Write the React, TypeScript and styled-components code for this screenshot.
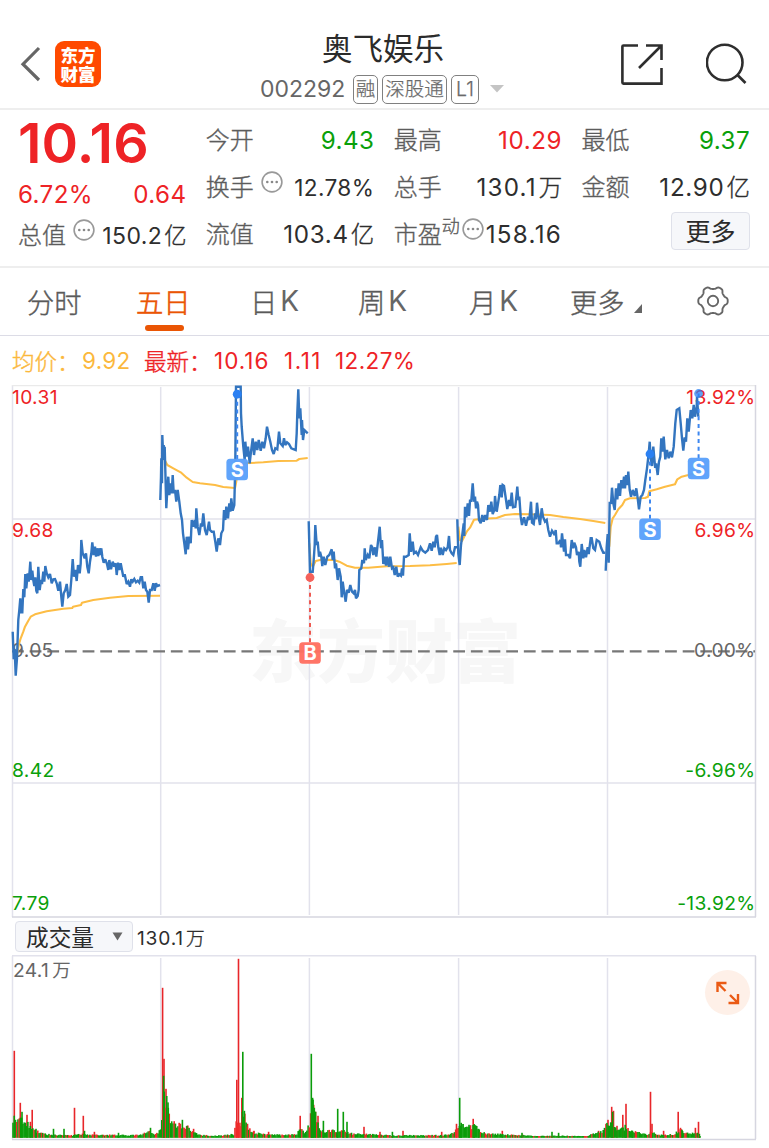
import React from 'react';
import styled, { createGlobalStyle } from 'styled-components';

const GlobalStyle = createGlobalStyle`
  * { box-sizing: border-box; }
  html, body { margin: 0; padding: 0; background: #fff; }
  body {
    font-family: Inter, 'Noto Sans CJK SC', sans-serif;
    color: #333;
    overflow: hidden;
  }
`;

const RED = '#ee2326';
const GREEN = '#0aa00a';
const GREY = '#666';
const DARK = '#2e2e2e';

const Screen = styled.main`
  width: 769px;
  height: 1148px;
  display: flex;
  flex-direction: column;
  background: #fff;
`;

/* ---------- header ---------- */

const Header = styled.header`
  height: 110px;
  flex: none;
  display: grid;
  grid-template-columns: 240px 1fr 149px;
  border-bottom: 2px solid #eee;
`;

const HeaderLeft = styled.div`
  display: flex;
  align-items: center;
  gap: 14px;
  padding: 20px 0 0 20px;
`;

const Logo = styled.div`
  width: 46px;
  height: 46px;
  border-radius: 9px;
  background: #ff4a00;
  color: #fff;
  display: flex;
  flex-direction: column;
  align-items: center;
  justify-content: center;
  font: 900 17.5px/19.5px 'Noto Sans CJK SC', sans-serif;
`;

const HeaderMid = styled.div`
  display: flex;
  flex-direction: column;
  padding-left: 20px;
`;

const StockName = styled.h1`
  margin: 29px 0 0 62px;
  font: 400 30.5px/36px 'Noto Sans CJK SC', sans-serif;
  color: #2b2b2b;
`;

const CodeLine = styled.div`
  display: flex;
  align-items: center;
  height: 30px;
  margin-top: 9px;
`;

const Code = styled.span`
  width: 93px;
  font-size: 23px;
  line-height: 30px;
  color: ${GREY};
`;

const Tag = styled.span<{ $w: number }>`
  width: ${(p) => p.$w}px;
  height: 29px;
  margin-right: 4px;
  border: 1.4px solid #808080;
  border-radius: 5px;
  display: flex;
  align-items: center;
  justify-content: center;
  font-size: 19.5px;
  font-weight: 300;
  line-height: 27px;
  white-space: nowrap;
  color: #6a6a6a;
  -webkit-text-stroke: 0.25px currentColor;
`;

const Caret = styled.svg`
  display: block;
  margin-left: 7px;
`;

const HeaderRight = styled.div`
  display: flex;
  align-items: center;
  gap: 42px;
  padding-top: 20px;
`;

/* ---------- quote figures ---------- */

const Quote = styled.section`
  height: 158px;
  flex: none;
  display: flex;
  justify-content: space-between;
  padding: 6px 19px 0 18px;
  border-bottom: 2px solid #eee;
`;

const QuoteColumn = styled.div`
  width: 168.5px;
  display: flex;
  flex-direction: column;
`;

const Row = styled.div<{ $h?: number }>`
  height: ${(p) => p.$h ?? 47}px;
  display: flex;
  align-items: center;
  justify-content: space-between;
  white-space: nowrap;
`;

const Price = styled.div`
  height: 57px;
  font-size: 55.5px;
  line-height: 54px;
  font-weight: 600;
  letter-spacing: 0.1px;
  color: ${RED};
`;

const Label = styled.span`
  display: inline-flex;
  align-items: center;
  font: 300 24px/34px 'Noto Sans CJK SC', sans-serif;
  padding-bottom: 2px;
  color: #5c5c5c;
  -webkit-text-stroke: 0.35px currentColor;
`;

const Value = styled.span<{ $c?: string; $s?: number; $ls?: number }>`
  font-size: ${(p) => p.$s ?? 24.2}px;
  line-height: 34px;
  letter-spacing: ${(p) => p.$ls ?? 0.4}px;
  padding-top: 2px;
  color: ${(p) => p.$c ?? DARK};
`;

const Unit = styled.span`
  margin-left: 2px;
  letter-spacing: 0;
  font: 300 0.97em/1 'Noto Sans CJK SC', sans-serif;
  -webkit-text-stroke: 0.35px currentColor;
`;

const Dynamic = styled.sup`
  align-self: flex-start;
  font-size: 18px;
  line-height: 18px;
  vertical-align: baseline;
`;

const MoreButton = styled.button`
  align-self: flex-end;
  width: 79px;
  height: 38px;
  margin-top: 2px;
  padding: 0 0 1px;
  border: 1.5px solid #dfe1ea;
  border-radius: 4px;
  background: #f6f7fa;
  font: 400 25px/33px 'Noto Sans CJK SC', sans-serif;
  color: #2b2b2b;
`;

/* ---------- tabs ---------- */

const Tabs = styled.nav`
  height: 68px;
  flex: none;
  display: flex;
  align-items: center;
  padding-left: 27px;
  border-bottom: 1.5px solid #dcdce6;
`;

const Tab = styled.div<{ $w: number; $active?: boolean }>`
  width: ${(p) => p.$w}px;
  height: 66px;
  display: flex;
  flex-direction: column;
  align-items: flex-start;
  font: 300 27.3px/40px 'Noto Sans CJK SC', sans-serif;
  padding-top: 12px;
  color: ${(p) => (p.$active ? '#ea5504' : '#5a5a5a')};
  -webkit-text-stroke: ${(p) => (p.$active ? 0.6 : 0.4)}px currentColor;
`;

const TabText = styled.span`
  display: inline-flex;
  align-items: flex-end;
  gap: 3px;
`;

const Latin = styled.span`
  font-family: Inter, sans-serif;
  font-size: 28px;
  font-weight: 400;
  color: #666;
  -webkit-text-stroke: 0;
`;

const Underline = styled.i`
  width: 39px;
  height: 6px;
  margin: 4px 0 0 9px;
  border-radius: 3px;
  background: #ea5504;
`;

/* ---------- charts ---------- */

const Legend = styled.div`
  height: 49px;
  flex: none;
  display: flex;
  align-items: center;
  padding: 1px 0 0 12px;
  font-size: 22.5px;
  line-height: 40px;
  white-space: nowrap;
`;

const LegendItem = styled.span<{ $w: number; $c: string; $han?: boolean; $ls?: number }>`
  width: ${(p) => p.$w}px;
  color: ${(p) => p.$c};
  letter-spacing: ${(p) => p.$ls ?? 0}px;
  font-family: ${(p) => (p.$han ? "'Noto Sans CJK SC'" : 'Inter')}, sans-serif;
  font-weight: ${(p) => (p.$han ? 300 : 400)};
  padding-bottom: ${(p) => (p.$han ? 2 : 0)}px;
  -webkit-text-stroke: ${(p) => (p.$han ? 0.4 : 0)}px currentColor;
`;

const ChartSvg = styled.svg`
  display: block;
  flex: none;
`;

const VolumeBar = styled.div`
  height: 37px;
  flex: none;
  display: flex;
  align-items: center;
  gap: 4px;
  padding-left: 15px;
`;

const IndicatorSelect = styled.button`
  width: 118px;
  height: 31px;
  display: flex;
  align-items: center;
  justify-content: space-between;
  padding: 0 9px 1px 10px;
  border: 1.5px solid #dfe1ea;
  border-radius: 4px;
  background: #f6f7fa;
  font: 400 22.7px/27px 'Noto Sans CJK SC', sans-serif;
  color: #2b2b2b;
`;

const VolumePanel = styled.section`
  position: relative;
`;

const Expand = styled.button`
  position: absolute;
  left: 705px;
  top: 15px;
  width: 45px;
  height: 45px;
  padding: 0;
  border: 0;
  border-radius: 50%;
  background: #fef0e8;
`;

type Pt = [number, number];
type Session = { x: number; y: number; price: string; avg: string };

// Each session is plotted in thirds of a pixel from its own origin.
const sessions: Session[] = [
  {
    x: 0, y: 380,
    price: '38,755 41,838 44,808 47,887 51,835 55,720 58,690 61,655 64,697 67,697 70,627 73,652 76,582 79,625 83,580 86,605 89,570 91,545 94,600 97,572 100,600 103,618 106,592 109,632 112,640 115,560 119,630 123,600 126,612 130,575 133,605 136,558 140,580 145,592 150,582 155,610 160,598 165,597 170,610 175,632 180,605 184,650 187,680 191,640 196,630 200,612 205,650 210,645 214,600 218,537 222,590 226,570 230,603 234,555 239,580 242,550 244,480 248,520 254,535 258,520 262,560 266,580 270,545 274,520 277,487 281,525 285,500 288,530 291,505 295,528 298,505 301,525 304,505 307,530 311,548 316,538 321,552 325,570 328,540 333,568 338,545 343,560 347,550 350,585 354,548 358,570 362,550 366,570 370,590 374,583 380,612 385,605 390,620 394,598 398,605 403,597 408,607 413,602 418,608 422,592 426,592 430,625 434,605 438,630 442,635 446,668 450,630 455,630 460,610 464,632 468,610 472,618 480,615',
    avg: '50,830 56,795 62,775 70,755 75,740 85,722 92,710 105,703 140,694 190,686 217,684 219,680 243,675 246,668 280,660 330,653 385,648 480,647',
  },
  {
    x: 150, y: 380,
    price: '31,360 33,290 34,235 36,310 37,165 39,215 41,195 43,240 44,200 46,270 49,385 52,330 55,290 58,345 62,310 65,340 68,285 71,340 75,330 79,365 83,330 88,365 92,400 96,420 99,460 103,490 107,523 110,470 114,508 118,470 122,490 125,420 130,440 134,420 137,445 139,385 143,440 148,465 153,430 156,440 160,400 165,450 170,465 177,425 180,450 185,455 191,455 196,485 200,515 205,475 210,495 214,460 219,450 222,390 226,420 229,380 234,415 238,370 241,395 244,355 248,392 253,375 256,250 258,20 262,20 272,20 273,100 275,140 280,200 284,240 286,185 290,230 294,200 299,250 303,215 308,175 312,225 317,185 322,210 326,180 332,212 337,185 342,205 347,175 351,140 356,165 361,185 366,210 371,222 376,205 382,208 387,155 391,190 398,198 402,175 406,195 411,187 417,192 424,205 432,208 437,210 440,160 442,100 445,28 448,115 451,85 455,165 456,120 459,180 463,150 468,155 473,160',
    avg: '43,238 52,255 70,265 92,277 110,293 128,306 150,310 195,315 220,321 255,324 258,310 262,285 270,262 285,250 340,247 385,243 440,242 448,237 473,234',
  },
  {
    x: 300, y: 460,
    price: '26,184 30,335 38,335 41,300 44,255 46,195 50,255 53,245 57,290 60,275 64,290 67,318 71,290 76,315 82,290 88,285 95,268 98,300 101,275 105,325 108,310 113,360 117,325 122,350 125,412 128,365 133,400 137,425 141,390 146,398 151,375 156,395 161,400 165,390 168,415 173,408 176,390 178,330 184,325 187,300 192,310 194,265 197,300 203,285 208,295 213,255 217,262 220,285 225,262 229,290 234,245 239,200 243,265 246,240 250,312 254,290 258,317 262,290 267,320 271,290 276,325 280,322 284,345 289,320 293,350 298,343 303,347 306,325 309,347 312,290 318,290 326,285 329,220 333,275 338,245 342,280 348,275 354,285 362,262 368,272 376,278 384,270 390,250 395,272 400,245 404,262 408,230 411,225 415,262 419,285 423,263 428,285 433,265 438,270 443,262 447,228 450,270 455,280 460,285 465,262 472,262',
    avg: '28,250 32,310 38,320 47,303 60,300 100,299 118,305 140,317 165,323 205,323 260,319 330,318 390,316 440,312 470,309',
  },
  {
    x: 450, y: 460,
    price: '22,178 25,280 29,315 33,255 37,225 41,190 43,228 45,140 49,172 53,130 57,168 60,122 64,122 68,70 72,125 75,110 78,145 81,125 84,135 87,180 92,190 97,165 101,185 106,165 111,180 115,135 120,155 124,125 128,162 133,150 135,108 140,155 145,125 148,105 151,75 155,112 158,75 162,78 166,105 172,147 177,120 181,138 185,98 189,142 196,140 200,100 202,80 205,120 208,110 212,170 216,195 222,172 228,197 234,170 238,180 243,125 246,188 251,192 255,160 258,178 261,128 265,165 270,195 275,145 279,170 285,185 290,180 295,210 300,230 306,212 314,225 317,210 320,250 325,250 331,240 333,262 336,220 342,275 345,238 348,285 355,285 360,295 365,240 370,265 373,248 378,262 381,285 386,275 388,305 391,320 395,252 400,295 403,270 408,292 413,262 416,282 422,235 425,235 430,265 435,270 440,240 448,245 454,265 460,278 466,278',
    avg: '25,200 30,240 36,243 50,215 60,203 72,179 100,176 140,174 165,165 195,162 240,163 300,165 340,171 390,177 430,183 466,189',
  },
  {
    x: 590, y: 380,
    price: '47,572 50,500 53,462 56,548 59,365 63,372 66,323 70,370 74,390 78,325 82,358 86,310 90,348 94,300 98,325 102,290 105,325 108,285 112,315 115,275 119,330 123,350 128,330 134,348 139,325 143,355 147,388 152,350 157,345 162,330 166,300 171,265 176,220 179,185 182,235 186,258 190,200 195,258 199,255 203,285 207,245 211,230 214,175 218,215 221,170 226,238 231,210 236,235 241,215 246,232 251,200 256,130 260,90 268,85 272,130 276,175 280,212 284,172 288,185 292,115 296,155 302,90 307,115 311,75 315,110 320,80 321,50 325,110',
    avg: '58,500 62,440 68,415 75,405 85,388 97,375 105,360 120,355 165,354 174,350 178,334 200,328 225,320 255,313 262,298 275,290 295,285 318,278 327,270',
  },
];

const place = (points: string, s: Session) =>
  points
    .split(' ')
    .map((p) => {
      const [x, y] = p.split(',').map(Number);
      return `${(s.x + x / 3).toFixed(1)},${(s.y + y / 3).toFixed(1)}`;
    })
    .join(' ');

const AxisText = styled.text`
  font: 400 19.2px Inter, 'Noto Sans CJK SC', sans-serif;
  letter-spacing: 0.35px;
`;

const Watermark = styled.text`
  font: 900 68px 'Noto Sans CJK SC', sans-serif;
  fill: #f7f7f7;
`;

const MarkText = styled.text`
  font: 700 20px Inter, sans-serif;
  fill: #fff;
`;

type MarkProps = { x: number; dot: number; box: number; letter: string; faded?: boolean };

function TradeMark({ x, dot, box, letter, faded }: MarkProps) {
  const buy = letter === 'B';
  const line = buy ? '#ee5a52' : '#3d87f0';
  return (
    <g>
      <line x1={x} x2={x} y1={dot} y2={box} stroke={line} strokeWidth="2" strokeDasharray="4 3.6" />
      <circle cx={x} cy={dot} r="4.4" fill={buy ? '#f5615a' : '#2b80f2'} opacity={faded ? 0.75 : 1} />
      <rect x={x - 10.8} y={box - 10.8} width="21.6" height="21.6" rx="3.5" fill={buy ? '#ff6f61' : '#5aa0fb'} opacity="0.96" />
      <MarkText x={x} y={box + 7.2} textAnchor="middle">{letter}</MarkText>
    </g>
  );
}

const dayLines = [160.7, 309.4, 458.6, 607.5];

const leftScale: [string, number, string][] = [
  ['10.31', 404, RED], ['9.68', 537, RED], ['9.05', 657, GREY], ['8.42', 777, GREEN], ['7.79', 910, GREEN],
];
const rightScale: [string, number, string][] = [
  ['13.92%', 404, RED], ['6.96%', 537, RED], ['0.00%', 657, GREY], ['-6.96%', 777, GREEN], ['-13.92%', 910, GREEN],
];

function PriceChart() {
  return (
    <ChartSvg width="769" height="533" viewBox="0 385 769 533">
      <Watermark x="249" y="677" textLength="272">东方财富</Watermark>
      <g fill="none" stroke="#e2e2ec" strokeWidth="1.5">
        {dayLines.map((x) => <line key={x} x1={x} x2={x} y1="387" y2="915" />)}
        <path d="M12 519H755M12 783H755" />
        <path d="M12.5 385V917" />
        <path d="M12 385.5H756" stroke="#eaeaea" />
        <path d="M755.5 385V917M12 917H756" stroke="#d6d6e0" />
      </g>
      <path d="M12 651.3H755" stroke="#777" strokeWidth="2.2" strokeDasharray="11.8 5.85" />
      {leftScale.map(([t, y, c]) => <AxisText key={t} x="12" y={y} fill={c}>{t}</AxisText>)}
      {rightScale.map(([t, y, c]) => <AxisText key={t} x="755.5" y={y} fill={c} textAnchor="end">{t}</AxisText>)}
      <g fill="none" strokeLinejoin="round">
        {sessions.map((s) => (
          <polyline key={s.x} points={place(s.avg, s)} stroke="#fdbd45" strokeWidth="2.1" />
        ))}
        {sessions.map((s) => (
          <polyline key={s.x} points={place(s.price, s)} stroke="#3375bf" strokeWidth="2.4" strokeLinejoin="miter" strokeMiterlimit="2.5" />
        ))}
      </g>
      <TradeMark x={237.2} dot={394.2} box={469.5} letter="S" />
      <TradeMark x={310} dot={577.5} box={653} letter="B" />
      <TradeMark x={650} dot={454} box={529.3} letter="S" />
      <TradeMark x={698.6} dot={393.5} box={468.5} letter="S" faded />
    </ChartSvg>
  );
}

// Typical bar height along the time axis: [x, height]
const volumeBase: Pt[] = [
  [12, 20], [18, 20], [22, 19], [27, 14], [33, 9], [40, 5], [52, 3], [70, 2.3], [82, 4], [92, 3], [120, 2.7], [140, 2.7],
  [150, 7], [154, 3], [160, 7], [162, 22], [164, 48], [168, 31], [170, 17], [176, 13], [186, 12], [192, 7], [198, 3], [215, 2],
  [234, 3.5], [237, 20], [241, 11], [243, 28], [247, 12], [254, 5], [270, 3], [296, 3.5], [301, 9], [304, 6], [309, 12],
  [313, 34], [317, 19], [320, 7], [330, 7], [340, 7], [346, 7], [352, 4], [372, 3.5], [392, 2.3], [445, 2.7], [452, 5], [457, 9],
  [461, 12], [475, 12], [481, 6], [488, 4], [520, 3], [535, 1.7], [560, 2], [585, 1.5], [602, 6], [607, 13], [611, 19],
  [615, 9], [627, 9], [634, 6], [642, 5], [647, 3], [652, 7], [658, 2.5], [674, 4], [680, 8], [690, 4], [697, 5], [700, 2],
];

const volumeSpikes: [number, number, 'r' | 'g'][] = [
  [14.3, 87, 'r'], [20.3, 35, 'r'], [22, 26, 'g'], [27, 23, 'r'], [30.4, 16, 'r'], [32.2, 28, 'r'], [36, 9, 'g'], [53.5, 9, 'g'],
  [64, 9, 'g'], [74.5, 30, 'r'], [83.3, 22, 'r'], [84.5, 7, 'g'], [94.4, 6, 'r'], [118.5, 5, 'g'], [150.5, 10, 'g'], [162.6, 150, 'r'],
  [164, 79, 'r'], [163.6, 62, 'g'], [166, 49, 'r'], [168.3, 30, 'g'], [182.4, 18, 'g'], [187, 12, 'g'], [193.6, 9, 'r'],
  [236.8, 58, 'r'], [238.5, 179, 'r'], [241.8, 40, 'r'], [242.8, 86, 'g'], [244.4, 27, 'g'], [247.5, 14, 'r'], [254, 7, 'r'],
  [268.6, 6, 'r'], [300.2, 22, 'r'], [311.3, 84, 'g'], [312.6, 40, 'g'], [313.7, 33, 'r'], [315.5, 26, 'r'], [318, 22, 'r'],
  [323.4, 17, 'g'], [332, 8, 'r'], [337.7, 29, 'g'], [343.3, 26, 'g'], [347, 16, 'g'], [364, 11, 'r'], [380, 6, 'r'],
  [392.4, 6, 'g'], [403, 7, 'r'], [441.7, 6, 'r'], [456.5, 14, 'r'], [459.7, 40, 'g'], [461.2, 15, 'g'], [469, 13, 'g'],
  [473.2, 19, 'r'], [474.4, 12, 'g'], [478.6, 9, 'g'], [502.3, 7, 'r'], [522, 5, 'g'], [552, 6, 'g'], [558.6, 5, 'g'],
  [598.6, 7, 'r'], [606, 14, 'r'], [608, 18, 'r'], [611.7, 31, 'r'], [613.5, 27, 'r'], [612.6, 26, 'g'], [617, 12, 'r'],
  [622.8, 23, 'r'], [626, 34, 'r'], [625.2, 13, 'g'], [632.5, 7, 'g'], [650.5, 46, 'r'], [652, 14, 'r'], [663.6, 7, 'r'],
  [678.2, 26, 'r'], [680.5, 10, 'r'], [682, 8, 'g'], [695.4, 10, 'r'], [698.5, 16, 'r'], [699.4, 4, 'g'],
];

const baseAt = (x: number) => {
  const i = volumeBase.findIndex(([px]) => px > x);
  if (i <= 0) return volumeBase[volumeBase.length - 1][1];
  const [x0, h0] = volumeBase[i - 1];
  const [x1, h1] = volumeBase[i];
  return h0 + ((h1 - h0) * (x - x0)) / (x1 - x0);
};

const wobble = (n: number) => {
  const v = Math.sin(n * 127.1 + 11.7) * 43758.5453;
  return v - Math.floor(v);
};

function volumeTicks() {
  const ticks: { x: number; h: number; c: string }[] = [];
  for (let i = 0, x = 13; x < 700.5; i += 1, x += 1.24) {
    const red = wobble(i) < (x > 234 && x < 242 ? 1 : 0.28);
    const h = Math.max(1.8, baseAt(x) * (0.7 + wobble(i + 900) * 0.5));
    ticks.push({ x, h, c: red ? '#ee2b2b' : '#0a9c0a' });
  }
  return ticks;
}

function VolumeChart() {
  const floor = 1137.8;
  return (
    <ChartSvg width="769" height="193" viewBox="0 955 769 193">
      <g fill="none" stroke="#e2e2ec" strokeWidth="1.5">
        {dayLines.map((x) => <line key={x} x1={x} x2={x} y1="958" y2="1138" />)}
        <path d="M12.5 956V1139M12 955.7H756" />
        <path d="M755.5 956V1139M12 1139.5H756" stroke="#d6d6e0" />
      </g>
      <AxisText x="13" y="977" fill={GREY}>24.1<tspan dx="3" fontSize="18.500">万</tspan></AxisText>
      {volumeSpikes.filter((s) => s[2] === 'r').map(([x, h]) => (
        <rect key={x} x={x - 0.8} y={floor - h} width="1.6" height={h} fill="#e8262a" />
      ))}
      {volumeTicks().map((t) => (
        <rect key={t.x} x={t.x - 0.8} y={floor - t.h} width="1.6" height={t.h} fill={t.c} />
      ))}
      {volumeSpikes.filter((s) => s[2] === 'g').map(([x, h]) => (
        <rect key={x} x={x - 0.8} y={floor - h} width="1.6" height={h} fill="#0a9c0a" />
      ))}
    </ChartSvg>
  );
}

const InfoSvg = styled.svg<{ $ml?: number }>`
  display: block;
  flex: none;
  margin: 0 0 8px ${(p) => p.$ml ?? 7}px;
`;

function Info({ ml }: { ml?: number }) {
  return (
    <InfoSvg $ml={ml} width="22" height="22" viewBox="0 0 22 22">
      <circle cx="11" cy="11" r="9.9" fill="none" stroke="#999" strokeWidth="1.6" />
      <g fill="#888">
        <circle cx="6.3" cy="11" r="1.3" />
        <circle cx="11" cy="11" r="1.3" />
        <circle cx="15.7" cy="11" r="1.3" />
      </g>
    </InfoSvg>
  );
}

// Six rounded teeth around the hub, one pointing straight right.
const gearPath = (() => {
  const pts: string[] = [];
  for (let a = 0; a < 360; a += 3) {
    const t = (a * Math.PI) / 180;
    const r = 13.4 + 1.4 * Math.tanh(1.8 * Math.cos(6 * t));
    pts.push(`${(17 + r * Math.cos(t)).toFixed(2)} ${(17 + r * Math.sin(t)).toFixed(2)}`);
  }
  return `M${pts.join('L')}Z`;
})();

const Gear = styled.svg`
  display: block;
  margin-bottom: 1px;
`;

export default function App() {
  return (
    <Screen>
      <GlobalStyle />
      <Header>
        <HeaderLeft>
          <svg width="21" height="36" viewBox="0 0 21 36" fill="none" stroke="#666" strokeWidth="3.2">
            <path d="M19 2L3 18.200L19 34" />
          </svg>
          <Logo><span>东方</span><span>财富</span></Logo>
        </HeaderLeft>
        <HeaderMid>
          <StockName>奥飞娱乐</StockName>
          <CodeLine>
            <Code>002292</Code>
            <Tag $w={25}>融</Tag>
            <Tag $w={65}>深股通</Tag>
            <Tag $w={28}>L1</Tag>
            <Caret width="14" height="8" viewBox="0 0 14 8"><path d="M0 0H14L7 7.500Z" fill="#c4c4c4" /></Caret>
          </CodeLine>
        </HeaderMid>
        <HeaderRight>
          <svg width="44" height="44" viewBox="0 0 44 44" fill="none" stroke="#2e2e2e" strokeWidth="2.6">
            <path d="M18 3.500H3.500Q2.400 3.500 2.400 4.600V40.500Q2.400 41.600 3.500 41.600H41.500V26" />
            <path d="M26 3.500H41.500V18M41.500 3.500L19 26" />
          </svg>
          <svg width="44" height="44" viewBox="0 0 44 44" fill="none" stroke="#2e2e2e" strokeWidth="2.6">
            <circle cx="18.700" cy="20.500" r="17.800" />
            <path d="M31.500 33L39.500 41" />
          </svg>
        </HeaderRight>
      </Header>

      <Quote>
        <QuoteColumn>
          <Price>10.16</Price>
          <Row $h={42}><Value $c={RED}>6.72%</Value><Value $c={RED}>0.64</Value></Row>
          <Row $h={40}><Label>总值<Info /></Label><Value $s={23}>150.2<Unit>亿</Unit></Value></Row>
        </QuoteColumn>
        <QuoteColumn>
          <Row><Label>今开</Label><Value $c={GREEN}>9.43</Value></Row>
          <Row><Label>换手<Info /></Label><Value $s={22.6}>12.78%</Value></Row>
          <Row><Label>流值</Label><Value $ls={0.7}>103.4<Unit>亿</Unit></Value></Row>
        </QuoteColumn>
        <QuoteColumn>
          <Row><Label>最高</Label><Value $c={RED} $ls={0.6}>10.29</Value></Row>
          <Row><Label>总手</Label><Value $ls={1.2}>130.1<Unit>万</Unit></Value></Row>
          <Row><Label>市盈<Dynamic>动</Dynamic><Info ml={2} /></Label><Value $ls={1.3}>158.16</Value></Row>
        </QuoteColumn>
        <QuoteColumn>
          <Row><Label>最低</Label><Value $c={GREEN}>9.37</Value></Row>
          <Row><Label>金额</Label><Value $ls={0.7}>12.90<Unit>亿</Unit></Value></Row>
          <MoreButton>更多</MoreButton>
        </QuoteColumn>
      </Quote>

      <Tabs>
        <Tab $w={109}><TabText>分时</TabText></Tab>
        <Tab $w={114} $active><TabText>五日</TabText><Underline /></Tab>
        <Tab $w={108}><TabText>日<Latin>K</Latin></TabText></Tab>
        <Tab $w={111}><TabText>周<Latin>K</Latin></TabText></Tab>
        <Tab $w={101}><TabText>月<Latin>K</Latin></TabText></Tab>
        <Tab $w={126}>
          <TabText>
            更多
            <svg width="17" height="20" viewBox="0 0 17 20"><path d="M14 3V12H6Z" fill="#666" /></svg>
          </TabText>
        </Tab>
        <Gear width="34" height="34" viewBox="0 0 34 34" fill="none" stroke="#666" strokeWidth="1.900" strokeLinejoin="round">
          <path d={gearPath} />
          <circle cx="17" cy="17" r="5.200" />
        </Gear>
      </Tabs>

      <Legend>
        <LegendItem $w={70} $c="#fbb83c" $han>均价：</LegendItem>
        <LegendItem $w={62} $c="#fbb83c" $ls={0.3}>9.92</LegendItem>
        <LegendItem $w={70} $c={RED} $han>最新：</LegendItem>
        <LegendItem $w={70} $c={RED} $ls={1}>10.16</LegendItem>
        <LegendItem $w={51} $c={RED} $ls={1.5}>1.11</LegendItem>
        <LegendItem $w={90} $c={RED} $ls={0.4}>12.27%</LegendItem>
      </Legend>

      <PriceChart />

      <VolumeBar>
        <IndicatorSelect>
          成交量
          <svg width="11" height="9" viewBox="0 0 11 9"><path d="M0.500 0.500H10.500L5.500 8.500Z" fill="#666" /></svg>
        </IndicatorSelect>
        <Value $s={19.2} $ls={0.8}>130.1<Unit>万</Unit></Value>
      </VolumeBar>

      <VolumePanel>
        <VolumeChart />
        <Expand aria-label="全屏">
          <svg width="45" height="45" viewBox="0 0 45 45" fill="none" stroke="#ea5a14" strokeWidth="2.400">
            <path d="M21.500 13H12.500V22M12.500 13L20.500 21" />
            <path d="M23.500 33H33V24M33 33L25 25" />
          </svg>
        </Expand>
      </VolumePanel>
    </Screen>
  );
}
